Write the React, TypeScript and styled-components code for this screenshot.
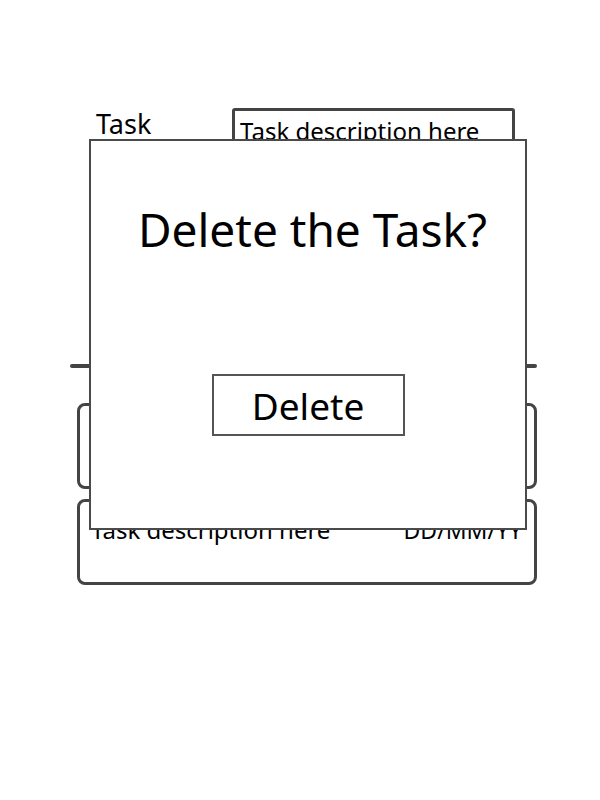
import React from "react";
import styled, { createGlobalStyle } from "styled-components";

const Global = createGlobalStyle`
  html, body { margin: 0; padding: 0; background: #ffffff; }
  body { font-family: "Noto Sans", "Open Sans", sans-serif; color: #000; }
`;

const Page = styled.div`
  position: relative;
  width: 600px;
  height: 800px;
  padding-top: 108px;
  box-sizing: border-box;
  overflow: hidden;
`;

const FormRow = styled.div`
  display: flex;
  align-items: flex-start;
  height: 256px;
`;

const Label = styled.div`
  margin-left: 96px;
  width: 136px;
  font-size: 27px;
  line-height: 32px;
`;

const InputBox = styled.div`
  width: 283px;
  height: 60px;
  box-sizing: border-box;
  border: 3px solid #444;
  border-radius: 3px;
  padding: 4px 5px;
  font-size: 24px;
  line-height: 32px;
  white-space: nowrap;
  overflow: hidden;
`;

const Divider = styled.div`
  margin-left: 70px;
  width: 467px;
  height: 4px;
  border-radius: 2px;
  background: #444;
`;

const List = styled.div`
  display: flex;
  flex-direction: column;
  gap: 10px;
  margin-top: 35px;
  margin-left: 77px;
  width: 460px;
`;

const Card = styled.div`
  display: flex;
  justify-content: space-between;
  align-items: flex-start;
  height: 86px;
  box-sizing: border-box;
  border: 3px solid #444;
  border-radius: 8px;
  padding: 13px 12px 0 11px;
  font-size: 24px;
  line-height: 30px;
`;

const DateText = styled.span`
  font-size: 23px;
`;

const Modal = styled.div`
  position: absolute;
  left: 89px;
  top: 139px;
  width: 438px;
  height: 391px;
  box-sizing: border-box;
  border: 2px solid #4a4a4a;
  background: #fff;
  display: flex;
  flex-direction: column;
  align-items: center;
  padding-top: 58px;
`;

const Title = styled.h2`
  margin: 0;
  padding-left: 9px;
  font-weight: 400;
  font-size: 46px;
  line-height: 60px;
`;

const Button = styled.button`
  margin-top: 115px;
  width: 193px;
  height: 62px;
  box-sizing: border-box;
  border: 2px solid #555;
  background: #fff;
  font-family: inherit;
  font-size: 37px;
  color: #000;
  padding: 0;
`;

export default function App() {
  return (
    <>
      <Global />
      <Page>
        <FormRow>
          <Label>Task</Label>
          <InputBox>Task description here</InputBox>
        </FormRow>
        <Divider />
        <List>
          <Card />
          <Card>
            <span>Task description here</span>
            <DateText>DD/MM/YY</DateText>
          </Card>
        </List>
        <Modal>
          <Title>Delete the Task?</Title>
          <Button>Delete</Button>
        </Modal>
      </Page>
    </>
  );
}
